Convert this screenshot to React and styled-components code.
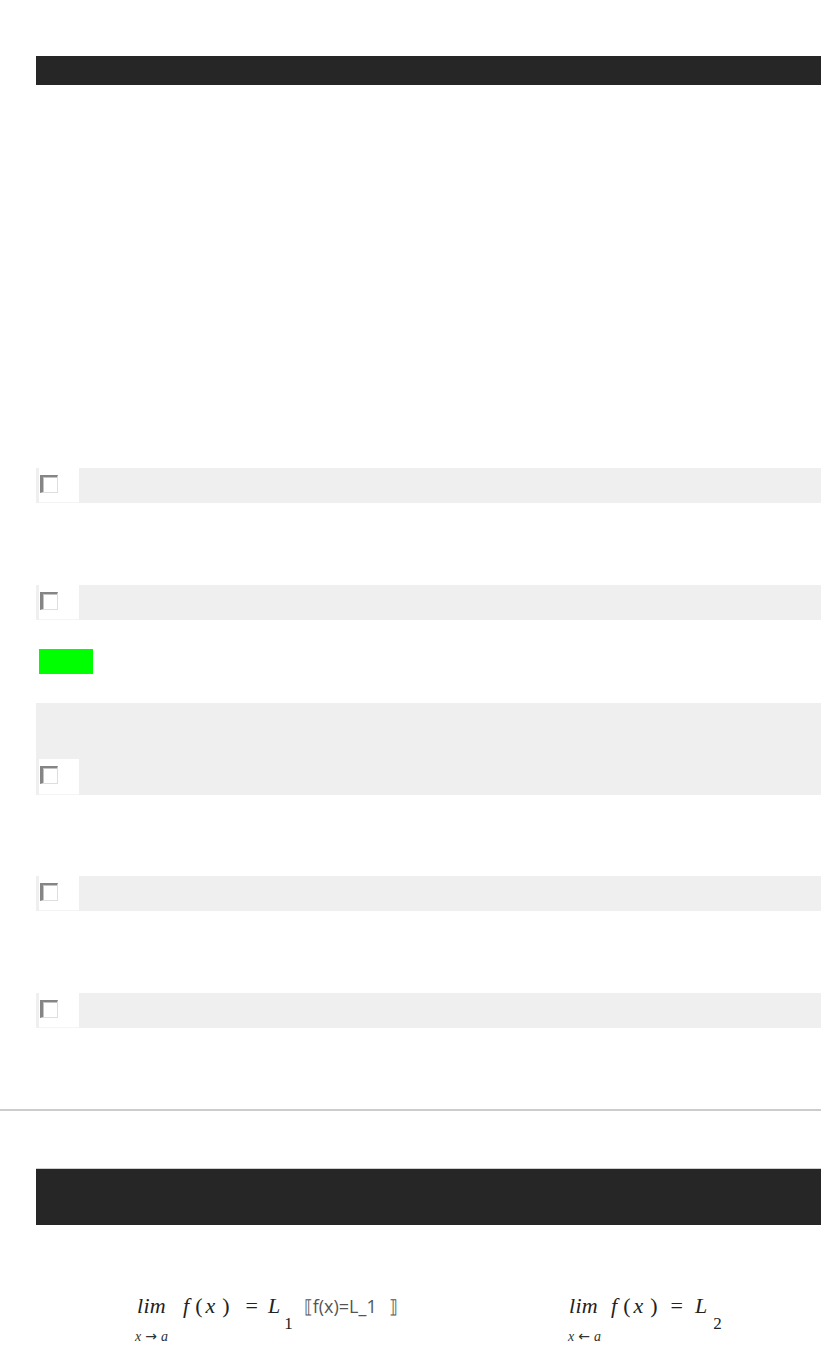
import React from "react";
import styled, { createGlobalStyle } from "styled-components";

const Global = createGlobalStyle`
  html, body { margin: 0; padding: 0; background: #fff; }
  body { font-family: "Open Sans", "Liberation Sans", sans-serif; color: #222; overflow-x: hidden; }
`;

const Page = styled.div`
  padding-top: 56px;
  width: 821px;
  min-height: 1346px;
`;

const DarkBar = styled.div`
  margin-left: 36px;
  height: ${(p) => p.$h}px;
  background: #262626;
  border-top: ${(p) => (p.$rule ? "1px solid #cfcfcf" : "none")};
`;

const Section = styled.div`
  margin-top: ${(p) => p.$top}px;
`;

const Row = styled.div`
  margin-left: 36px;
  height: 35px;
  background: #efefef;
  display: flex;
  margin-top: ${(p) => p.$top || 0}px;
`;

const Cell = styled.div`
  width: 40px;
  margin-left: 3px;
  background: #fff;
  border-bottom: 1px solid #f4f4f4;
  box-sizing: border-box;
  padding: 7px 0 0 1px;
`;

const Box = styled.div`
  width: 18px;
  height: 18px;
  box-sizing: border-box;
  border-style: solid;
  border-width: 2px 1px 1px 3px;
  border-color: #858585 #dedede #dedede #858585;
  background: #fff;
  box-shadow: inset 1px 1px 0 #c4c4c4;
`;

const Block = styled.div`
  margin-left: 36px;
  margin-top: ${(p) => p.$top}px;
  background: #efefef;
  padding-top: 56px;
`;

const InnerRow = styled.div`
  height: 36px;
  display: flex;
`;

const Green = styled.div`
  margin-left: 39px;
  margin-top: ${(p) => p.$top}px;
  width: 54px;
  height: 25px;
  background: #00ff00;
`;

const Rule = styled.hr`
  margin: ${(p) => p.$top}px 0 0 0;
  border: none;
  height: 2px;
  background: #cccccc;
`;

const MathArea = styled.div`
  display: grid;
  grid-template-columns: 435px 1fr;
  padding: 68px 0 0 133px;
`;

const Formula = styled.div`
  display: flex;
  align-items: baseline;
  white-space: nowrap;
  font-family: "Liberation Serif", "Times New Roman", serif;
  color: #222;
`;

const LimCol = styled.div`
  display: inline-flex;
  flex-direction: column;
  align-items: ${(p) => (p.$start ? "flex-start" : "center")};
  width: 37px;
`;

const Lim = styled.span`
  font-style: italic;
  font-size: 22px;
  line-height: 24px;
  letter-spacing: 0.3px;
  margin-left: ${(p) => p.$indent || 0}px;
`;

const Under = styled.span`
  display: flex;
  align-items: baseline;
  gap: 4px;
  font-style: italic;
  font-size: 14px;
  line-height: 14px;
  margin-top: 11px;
  color: #333;
`;

const Arrow = styled.span`
  font-family: "DejaVu Sans", sans-serif;
  font-style: normal;
  font-size: 14px;
`;

const Tok = styled.span`
  font-size: 22px;
  font-style: ${(p) => (p.$it ? "italic" : "normal")};
  margin-left: ${(p) => p.$gap || 0}px;
`;

const Sub = styled.span`
  font-size: 17px;
  margin-left: ${(p) => p.$gap || 0}px;
  transform: translateY(16px);
`;

const Note = styled.span`
  font-family: "Open Sans", "Liberation Sans", sans-serif;
  font-size: 18px;
  color: #555;
  margin-left: ${(p) => p.$gap || 0}px;
`;

const CheckRow = ({ top }) => (
  <Row $top={top}>
    <Cell>
      <Box />
    </Cell>
  </Row>
);

export default function App() {
  return (
    <Page>
      <Global />
      <DarkBar $h={29} />
      <Section $top={383}>
        <CheckRow />
        <CheckRow top={82} />
        <Green $top={29} />
        <Block $top={29}>
          <InnerRow>
            <Cell>
              <Box />
            </Cell>
          </InnerRow>
        </Block>
        <CheckRow top={81} />
        <CheckRow top={82} />
      </Section>
      <Rule $top={81} />
      <Section $top={57}>
        <DarkBar $h={56} $rule />
      </Section>
      <MathArea>
        <Formula>
          <LimCol>
            <Lim>lim</Lim>
            <Under>
              x<Arrow>→</Arrow>a
            </Under>
          </LimCol>
          <Tok $it $gap={13}>f</Tok>
          <Tok $gap={6}>(</Tok>
          <Tok $it $gap={3}>x</Tok>
          <Tok $gap={7}>)</Tok>
          <Tok $gap={16}>=</Tok>
          <Tok $it $gap={10}>L</Tok>
          <Sub $gap={4}>1</Sub>
          <Note $gap={11}>⟦f(x)=L_1</Note>
          <Note $gap={12}>⟧</Note>
        </Formula>
        <Formula>
          <LimCol $start>
            <Lim $indent={1}>lim</Lim>
            <Under>
              x<Arrow>←</Arrow>a
            </Under>
          </LimCol>
          <Tok $it $gap={6}>f</Tok>
          <Tok $gap={6}>(</Tok>
          <Tok $it $gap={3}>x</Tok>
          <Tok $gap={7}>)</Tok>
          <Tok $gap={13}>=</Tok>
          <Tok $it $gap={12}>L</Tok>
          <Sub $gap={6}>2</Sub>
        </Formula>
      </MathArea>
    </Page>
  );
}
